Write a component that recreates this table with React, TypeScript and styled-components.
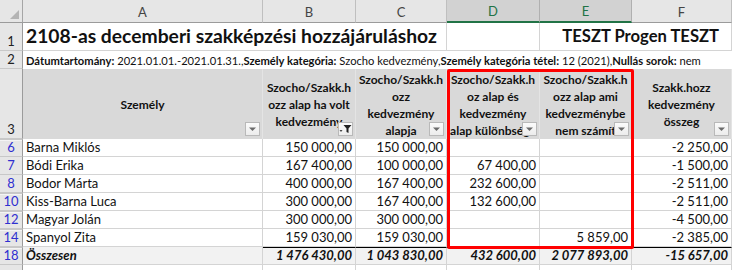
import React from 'react';
import styled, { createGlobalStyle, css } from 'styled-components';

const GlobalStyle = createGlobalStyle`
  html, body {
    margin: 0;
    padding: 0;
    background: #ffffff;
  }
  body {
    font-family: Lato, "Liberation Sans", sans-serif;
    color: #000;
  }
`;

// --- Layout ---

const Sheet = styled.div`
  position: relative;
  width: 732px;
  height: 270px;
  overflow: hidden;
  display: grid;
  grid-template-columns: 23px 240px 93px 91px 93px 92px 100px;
  grid-template-rows: 23px 28px 18px 70px repeat(7, 18px) 18px;
`;

const Corner = styled.div`
  position: relative;
  background: #e6e6e6;
  border-right: 1px solid #a6a6a6;
  border-bottom: 1px solid #9b9b9b;
  box-sizing: border-box;

  &::after {
    content: '';
    position: absolute;
    right: 3px;
    bottom: 3px;
    width: 0;
    height: 0;
    border-left: 9px solid transparent;
    border-bottom: 9px solid #b4b4b4;
  }
`;

const ColHead = styled.div<{ $selected?: boolean }>`
  display: flex;
  align-items: center;
  justify-content: center;
  box-sizing: border-box;
  background: #e6e6e6;
  border-right: 1px solid #bfbfbf;
  border-bottom: 1px solid #9b9b9b;
  font-size: 13px;
  color: #444;
  padding-top: 1px;

  ${(p) =>
    p.$selected &&
    css`
      background: #d2d2d2;
      color: #217346;
      border-bottom: 2px solid #217346;
      border-right-color: #b0b0b0;
    `}
`;

const RowNum = styled.div<{ $filtered?: boolean; $gap?: boolean }>`
  display: flex;
  align-items: flex-end;
  justify-content: center;
  box-sizing: border-box;
  background: #e6e6e6;
  border-right: 1px solid #9b9b9b;
  border-bottom: 1px solid #c8c8c8;
  font-size: 13px;
  line-height: 15px;
  color: ${(p) => (p.$filtered ? '#2f2fd0' : '#222')};
  padding-bottom: 1px;
  ${(p) =>
    p.$gap &&
    css`
      border-top: 1px solid #c8c8c8;
      box-shadow: inset 0 1px 0 #f4f4f4;
    `}
`;

const Cell = styled.div<{ $align?: 'left' | 'right' | 'center'; $total?: boolean }>`
  display: flex;
  align-items: flex-end;
  justify-content: ${(p) => (p.$align === 'right' ? 'flex-end' : p.$align === 'center' ? 'center' : 'flex-start')};
  box-sizing: border-box;
  padding: 0 3px 1px 3px;
  border-right: 1px solid #d4d4d4;
  border-bottom: 1px solid #d4d4d4;
  font-size: 13px;
  line-height: 15px;
  white-space: nowrap;
  overflow: hidden;
  color: #111;

  ${(p) =>
    p.$total &&
    css`
      background: #f2f2f2;
      font-weight: 700;
      font-style: italic;
    `}
`;

const NumCell = styled(Cell)<{ $rule?: boolean }>`
  ${(p) =>
    p.$rule &&
    css`
      border-top: 1px solid #000;
    `}
`;

const TitleCell = styled(Cell)`
  grid-column: span 3;
  font-size: 19.3px;
  font-weight: 700;
  line-height: 24px;
  padding-bottom: 2px;
  overflow: visible;
`;

const BrandCell = styled(Cell)`
  grid-column: span 2;
  justify-content: flex-end;
  font-size: 16.6px;
  font-weight: 700;
  line-height: 22px;
  padding: 0 12px 3px 0;
  overflow: visible;
`;

const InfoCell = styled(Cell)`
  grid-column: span 6;
  font-size: 11.2px;
  line-height: 14px;
  padding-bottom: 1px;
  border-right: none;
  border-bottom: none;

  b {
    font-weight: 700;
  }
`;

const HeadCell = styled.div`
  position: relative;
  display: flex;
  flex-direction: column;
  align-items: center;
  justify-content: center;
  box-sizing: border-box;
  background: #d9d9d9;
  border-right: 1px solid #e4e4e4;
  font-size: 12px;
  font-weight: 700;
  line-height: 17px;
  text-align: center;
  white-space: nowrap;
  overflow: hidden;
  color: #111;
  padding-top: 1px;
`;

const FilterBtn = styled.span`
  position: absolute;
  right: 2px;
  bottom: 3px;
  width: 15px;
  height: 14px;
  box-sizing: border-box;
  border: 1px solid #b9b9b9;
  background: linear-gradient(#fbfbfb, #ececec);
  display: flex;
  align-items: center;
  justify-content: center;
`;

const Highlight = styled.div`
  position: absolute;
  left: 447px;
  top: 69px;
  width: 187px;
  height: 180px;
  box-sizing: border-box;
  border: 3px solid #ff0000;
  border-radius: 2px;
  pointer-events: none;
`;

// --- Data ---

interface Row {
  num: number;
  name: string;
  b: string;
  c: string;
  d: string;
  e: string;
  f: string;
}

const rows: Row[] = [
  { num: 6, name: 'Barna Miklós', b: '150 000,00', c: '150 000,00', d: '', e: '', f: '-2 250,00' },
  { num: 7, name: 'Bódi Erika', b: '167 400,00', c: '100 000,00', d: '67 400,00', e: '', f: '-1 500,00' },
  { num: 8, name: 'Bodor Márta', b: '400 000,00', c: '167 400,00', d: '232 600,00', e: '', f: '-2 511,00' },
  { num: 10, name: 'Kiss-Barna Luca', b: '300 000,00', c: '167 400,00', d: '132 600,00', e: '', f: '-2 511,00' },
  { num: 12, name: 'Magyar Jolán', b: '300 000,00', c: '300 000,00', d: '', e: '', f: '-4 500,00' },
  { num: 14, name: 'Spanyol Zita', b: '159 030,00', c: '159 030,00', d: '', e: '5 859,00', f: '-2 385,00' },
];

const headers: { lines: string[]; funnel?: boolean }[] = [
  { lines: ['Személy'] },
  { lines: ['Szocho/Szakk.h', 'ozz alap ha volt', 'kedvezmény'], funnel: true },
  { lines: ['Szocho/Szakk.h', 'ozz', 'kedvezmény', 'alapja'] },
  { lines: ['Szocho/Szakk.h', 'oz alap és', 'kedvezmény', 'alap különbsége'] },
  { lines: ['Szocho/Szakk.h', 'ozz alap ami', 'kedvezménybe', 'nem számít'] },
  { lines: ['Szakk.hozz', 'kedvezmény', 'összeg'] },
];

const DropIcon = () => (
  <svg width="9" height="6" viewBox="0 0 9 6">
    <path d="M1 1.5 L8 1.5 L4.5 5 Z" fill="#6b6b6b" />
  </svg>
);

const FunnelIcon = () => (
  <svg width="13" height="10" viewBox="0 0 13 10">
    <path d="M0.5 6 L3.5 6 L2 8 Z" fill="#444" />
    <path d="M4.5 1 L12.5 1 L9.5 4.5 L9.5 9 L7.5 8 L7.5 4.5 Z" fill="#222" />
  </svg>
);

export default function App() {
  return (
    <>
      <GlobalStyle />
      <Sheet>
        <Corner />
        {['A', 'B', 'C', 'D', 'E', 'F'].map((l) => (
          <ColHead key={l} $selected={l === 'D' || l === 'E'}>
            {l}
          </ColHead>
        ))}

        <RowNum>1</RowNum>
        <TitleCell>2108-as decemberi szakképzési hozzájáruláshoz</TitleCell>
        <Cell />
        <BrandCell>TESZT Progen TESZT</BrandCell>

        <RowNum>2</RowNum>
        <InfoCell>
          <b>Dátumtartomány:</b>&nbsp;2021.01.01.-2021.01.31.,<b>Személy kategória:</b>&nbsp;Szocho kedvezmény,
          <b>Személy kategória tétel:</b>&nbsp;12 (2021),<b>Nullás sorok:</b>&nbsp;nem
        </InfoCell>

        <RowNum>3</RowNum>
        {headers.map((h, i) => (
          <HeadCell key={i}>
            {h.lines.map((line) => (
              <span key={line}>{line}</span>
            ))}
            <FilterBtn>{h.funnel ? <FunnelIcon /> : <DropIcon />}</FilterBtn>
          </HeadCell>
        ))}

        {rows.map((r, i) => (
          <React.Fragment key={r.num}>
            <RowNum $filtered $gap={i === 0 || r.num - rows[i - 1].num > 1}>
              {r.num}
            </RowNum>
            <Cell>{r.name}</Cell>
            <NumCell $align="right">{r.b}</NumCell>
            <NumCell $align="right">{r.c}</NumCell>
            <NumCell $align="right">{r.d}</NumCell>
            <NumCell $align="right">{r.e}</NumCell>
            <NumCell $align="right">{r.f}</NumCell>
          </React.Fragment>
        ))}

        <RowNum $filtered $gap>
          18
        </RowNum>
        <Cell $total>Összesen</Cell>
        <NumCell $align="right" $total $rule>1 476 430,00</NumCell>
        <NumCell $align="right" $total $rule>1 043 830,00</NumCell>
        <NumCell $align="right" $total $rule>432 600,00</NumCell>
        <NumCell $align="right" $total $rule>2 077 893,00</NumCell>
        <NumCell $align="right" $total $rule>-15 657,00</NumCell>

        <RowNum />
        <Cell />
        <Cell />
        <Cell />
        <Cell />
        <Cell />
        <Cell />

        <Highlight />
      </Sheet>
    </>
  );
}
